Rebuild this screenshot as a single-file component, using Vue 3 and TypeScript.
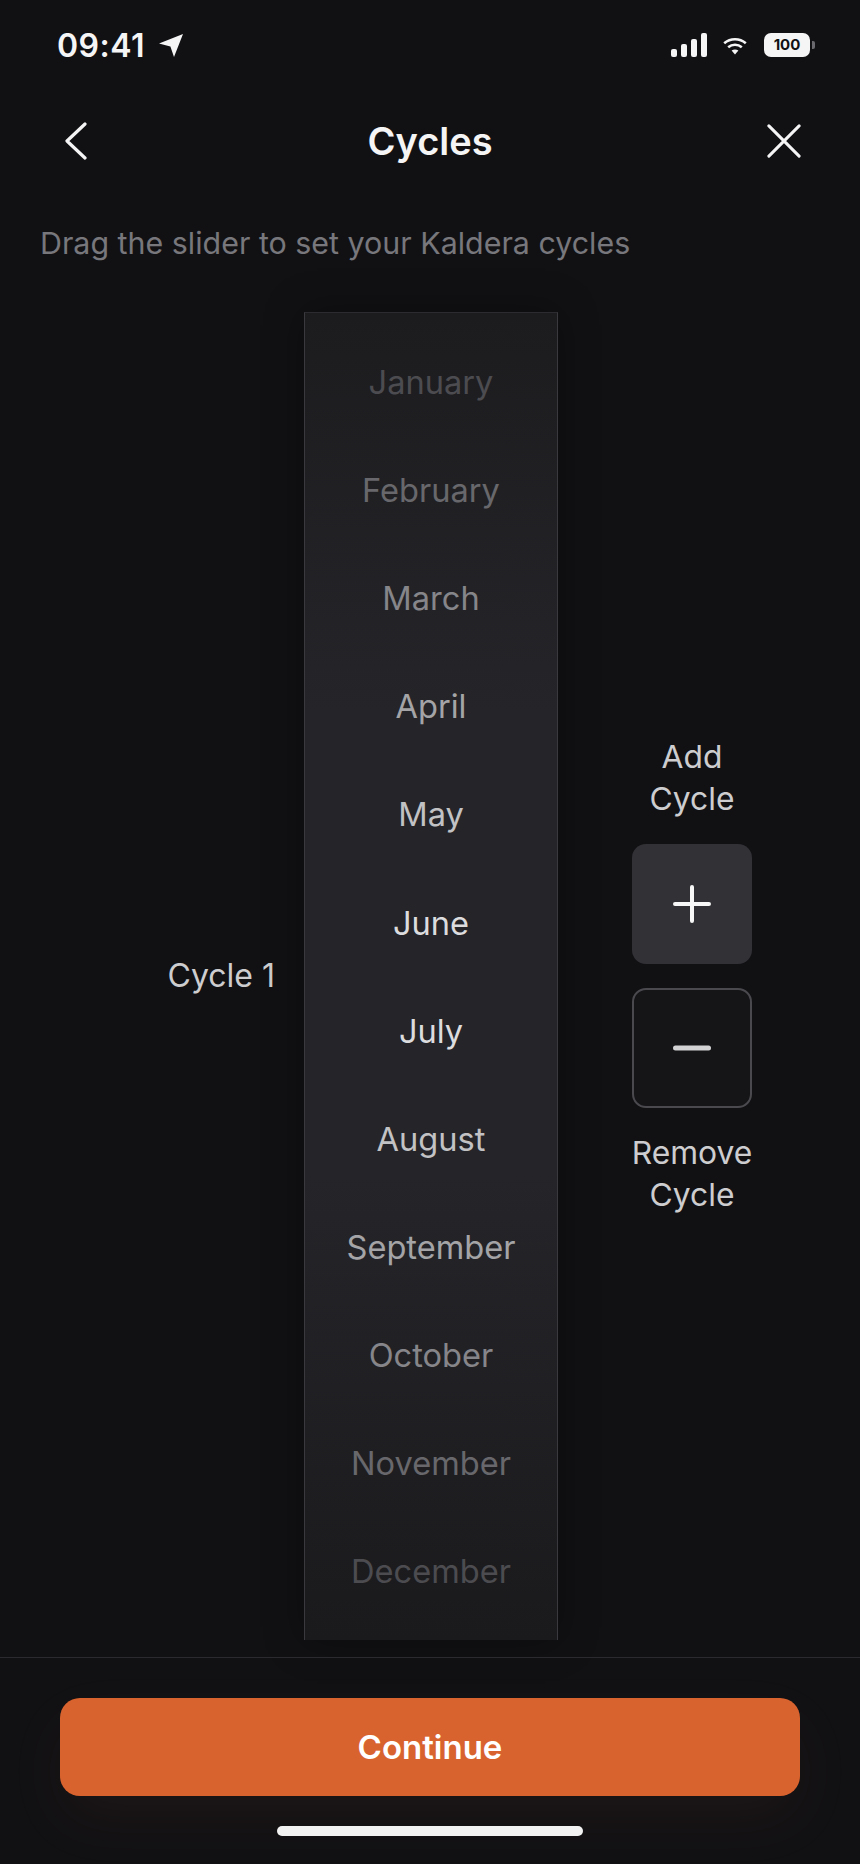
<template>
  <div class="screen">
    <!-- Status bar -->
    <div class="status">
      <div class="status__left">
        <span class="status__time">09:41</span>
        <svg class="status__arrow" viewBox="0 0 24 23" fill="#f5f5f6">
          <path d="M24 0 15 23l-3.6-10.6L0 9.4z" />
        </svg>
      </div>
      <div class="status__right">
        <div class="signal">
          <span v-for="h in signalBars" :key="h" class="signal__bar" :style="{ height: h + 'px' }"></span>
        </div>
        <svg class="wifi" viewBox="0 0 24 18" fill="none" stroke="#f5f5f6" stroke-width="2.6">
          <path d="M1.2 6.2C7.4.9 16.6.9 22.8 6.2" />
          <path d="M5.2 10.2c3.9-3.2 9.7-3.2 13.6 0" />
          <path d="M12 17.6 8.6 13.6c2-1.5 4.8-1.5 6.8 0z" fill="#f5f5f6" stroke="none" />
        </svg>
        <div class="battery">
          <span class="battery__body">100</span>
          <span class="battery__nub"></span>
        </div>
      </div>
    </div>

    <!-- Nav -->
    <div class="nav">
      <svg class="nav__back" viewBox="0 0 22 38" fill="none" stroke="#f5f5f6" stroke-width="3.2" stroke-linecap="round" stroke-linejoin="round">
        <path d="M20 2 2 19l18 17" />
      </svg>
      <h1 class="nav__title">Cycles</h1>
      <svg class="nav__close" viewBox="0 0 36 36" fill="none" stroke="#f5f5f6" stroke-width="3.2" stroke-linecap="round">
        <path d="M2 2l32 32M34 2 2 34" />
      </svg>
    </div>

    <p class="hint">Drag the slider to set your Kaldera cycles</p>

    <!-- Slider -->
    <div class="picker">
      <div class="picker__label">Cycle 1</div>
      <div class="picker__track">
        <div
          v-for="m in months"
          :key="m.name"
          class="picker__month"
          :style="{ color: m.color }"
        >
          {{ m.name }}
        </div>
      </div>
      <div class="actions">
        <div class="actions__text">Add<br />Cycle</div>
        <button class="actions__btn actions__btn--add">
          <svg viewBox="0 0 38 38" fill="none" stroke="#f7f7f8" stroke-width="4" stroke-linecap="round">
            <path d="M2 19h34M19 2v34" />
          </svg>
        </button>
        <button class="actions__btn actions__btn--remove">
          <svg viewBox="0 0 38 38" fill="none" stroke="#d2d2d4" stroke-width="5" stroke-linecap="round">
            <path d="M2.5 19h33" />
          </svg>
        </button>
        <div class="actions__text">Remove<br />Cycle</div>
      </div>
    </div>

    <!-- Footer -->
    <div class="footer">
      <button class="footer__cta">Continue</button>
      <div class="footer__home"></div>
    </div>
  </div>
</template>

<script setup lang="ts">
interface Month {
  name: string
  color: string
}

const signalBars: number[] = [8, 13, 18, 24]

const months: Month[] = [
  { name: 'January', color: '#4c4c50' },
  { name: 'February', color: '#68686c' },
  { name: 'March', color: '#86868a' },
  { name: 'April', color: '#a4a4a7' },
  { name: 'May', color: '#c2c2c4' },
  { name: 'June', color: '#dcdcde' },
  { name: 'July', color: '#dcdcde' },
  { name: 'August', color: '#c2c2c4' },
  { name: 'September', color: '#a4a4a7' },
  { name: 'October', color: '#86868a' },
  { name: 'November', color: '#68686c' },
  { name: 'December', color: '#4c4c50' }
]
</script>

<style>
html,
body {
  margin: 0;
  background: #111114;
}
</style>

<style scoped>
.screen {
  width: 860px;
  height: 1864px;
  display: flex;
  flex-direction: column;
  background: #111114;
  color: #f5f5f6;
  font-family: "Inter", "Liberation Sans", sans-serif;
  overflow: hidden;
}

/* Status bar */
.status {
  height: 92px;
  flex-shrink: 0;
  display: flex;
  justify-content: space-between;
  box-sizing: border-box;
  padding: 33px 45px 0 57px;
}

.status__left {
  display: flex;
  align-items: flex-start;
  gap: 14px;
}

.status__time {
  font-size: 32px;
  font-weight: 600;
  line-height: 26px;
  letter-spacing: 0.5px;
}

.status__arrow {
  width: 24px;
  height: 23px;
  margin-top: 1px;
}

.status__right {
  display: flex;
  align-items: flex-start;
}

.signal {
  display: flex;
  align-items: flex-end;
  gap: 4px;
  height: 24px;
}

.signal__bar {
  width: 6px;
  border-radius: 2px;
  background: #f5f5f6;
}

.wifi {
  width: 24px;
  height: 18px;
  margin: 4px 0 0 16px;
}

.battery {
  display: flex;
  align-items: center;
  margin-left: 17px;
}

.battery__body {
  width: 46px;
  height: 24px;
  border-radius: 7px;
  background: #f5f5f6;
  color: #111114;
  font-size: 15px;
  font-weight: 700;
  line-height: 24px;
  text-align: center;
}

.battery__nub {
  width: 3px;
  height: 8px;
  margin-left: 2px;
  border-radius: 0 2px 2px 0;
  background: #6a6a6e;
}

/* Nav */
.nav {
  height: 98px;
  flex-shrink: 0;
  display: grid;
  grid-template-columns: 1fr auto 1fr;
  align-items: center;
  padding: 0 59px 0 59px;
}

.nav__back {
  width: 22px;
  height: 38px;
  margin-left: 6px;
}

.nav__title {
  margin: 0;
  font-size: 38px;
  font-weight: 600;
  line-height: 46px;
}

.nav__close {
  width: 34px;
  height: 34px;
  justify-self: end;
}

/* Hint */
.hint {
  height: 122px;
  flex-shrink: 0;
  box-sizing: border-box;
  margin: 0;
  padding: 35px 0 0 40px;
  color: #77777c;
  font-size: 30.4px;
  line-height: 36px;
}

/* Picker */
.picker {
  height: 1328px;
  flex-shrink: 0;
  display: grid;
  grid-template-columns: 304px 254px 1fr;
  align-items: center;
}

.picker__label {
  padding-right: 29px;
  color: #cdcdcf;
  font-size: 32px;
  line-height: 40px;
  text-align: right;
}

.picker__track {
  height: 100%;
  box-sizing: border-box;
  padding-top: 15px;
  background: linear-gradient(180deg, #1c1c1f 0%, #252529 30%, #252529 65%, #1a1a1d 100%);
  border-left: 1px solid #3a3a3e;
  border-right: 1px solid #3a3a3e;
  border-top: 1px solid #2c2c30;
  box-shadow: 0 0 36px rgba(0, 0, 0, 0.35);
}

.picker__month {
  height: 108.1px;
  display: flex;
  align-items: center;
  justify-content: center;
  font-size: 32.6px;
}

.actions {
  display: flex;
  flex-direction: column;
  align-items: center;
  width: 120px;
  margin-left: 74px;
}

.actions__text {
  color: #cdcdcf;
  font-size: 31.8px;
  line-height: 42px;
  text-align: center;
  white-space: nowrap;
}

.actions__btn {
  width: 120px;
  height: 120px;
  display: flex;
  align-items: center;
  justify-content: center;
  box-sizing: border-box;
  padding: 0;
  border-radius: 14px;
}

.actions__btn svg {
  width: 38px;
  height: 38px;
}

.actions__btn--add {
  margin-top: 24px;
  border: none;
  background: #323236;
}

.actions__btn--remove {
  margin: 24px 0 24px;
  border: 2px solid #4a4a4e;
  background: #151518;
}

/* Footer */
.footer {
  flex-shrink: 0;
  margin-top: 17px;
  flex: 1;
  display: flex;
  flex-direction: column;
  align-items: center;
  box-sizing: border-box;
  padding-top: 40px;
  border-top: 1px solid #2b2b2f;
}

.footer__cta {
  width: 740px;
  height: 98px;
  border: none;
  border-radius: 20px;
  background: #d9632e;
  box-shadow: 0 24px 60px rgba(217, 99, 46, 0.06);
  color: #fff;
  font-family: inherit;
  font-size: 33px;
  font-weight: 600;
}

.footer__home {
  width: 306px;
  height: 10px;
  margin-top: 30px;
  border-radius: 5px;
  background: #f2f2f3;
}
</style>
